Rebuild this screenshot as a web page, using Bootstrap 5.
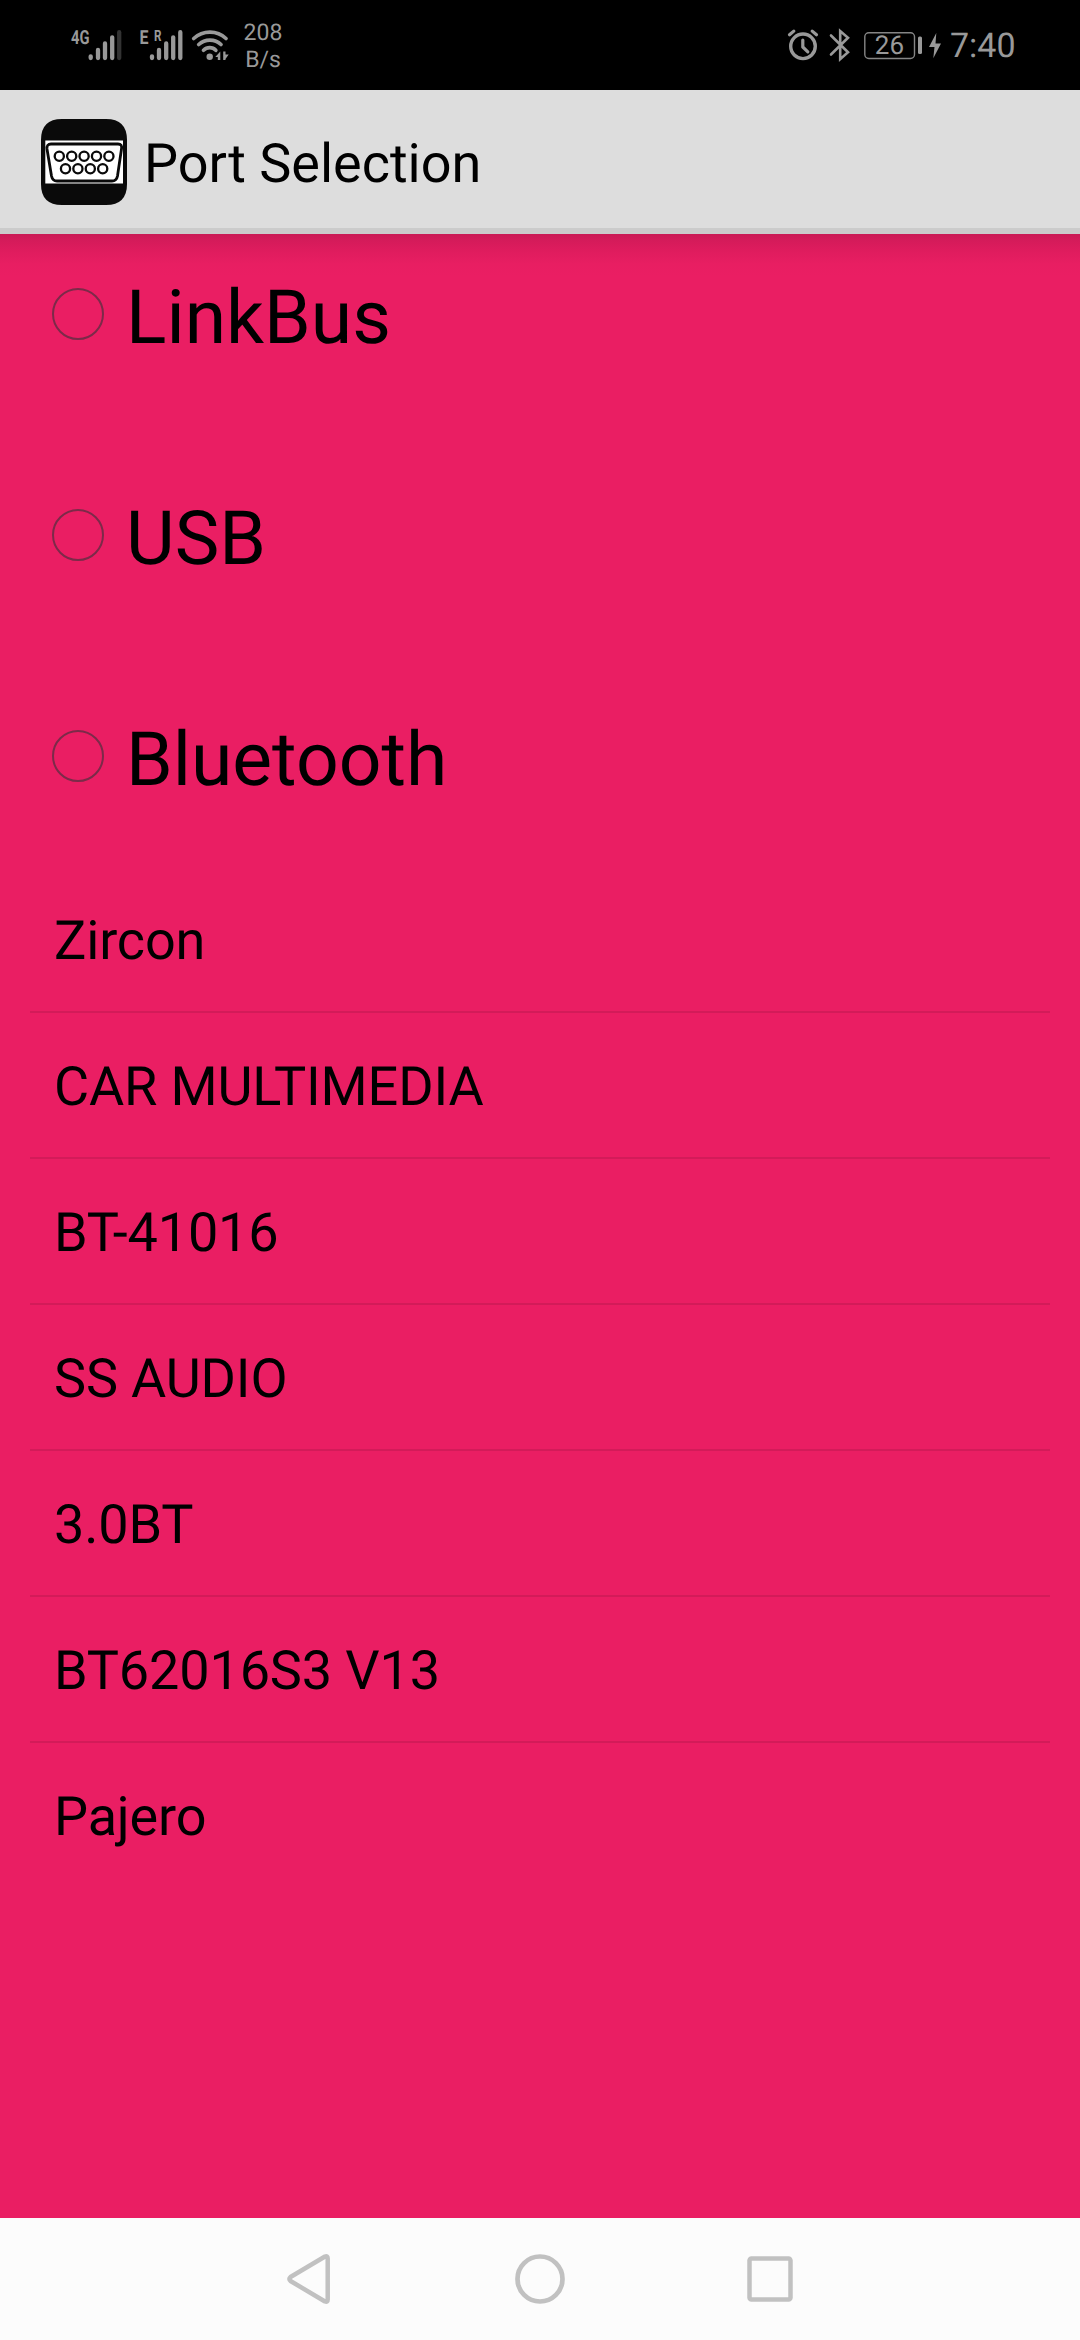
<!DOCTYPE html>
<html lang="en">
<head>
<meta charset="utf-8">
<meta name="viewport" content="width=device-width, initial-scale=1">
<title>Port Selection</title>
<link rel="stylesheet" href="https://cdn.jsdelivr.net/npm/bootstrap@5.3.0/dist/css/bootstrap.min.css">
<style>
  body { font-family: Roboto, "Liberation Sans", sans-serif; background: #ea1e63; color: #000; overflow: hidden; text-rendering: geometricPrecision; }
  svg { display: block; flex: none; }
  .screen { width: 1080px; height: 2340px; }
  .status-bar { height: 90px; background: #000; color: #999; padding: 0 64px 0 68px; }
  .status-bar svg text { font-family: Roboto, sans-serif; fill: #999; }
  .net-speed { font-size: 23px; line-height: 27px; width: 40px; margin-left: 11px; padding-top: 2px; }
  .clock { font-size: 34px; line-height: 40px; width: 66px; margin-left: 5px; padding-top: 2px; white-space: nowrap; }
  .app-bar { height: 144px; background: #ddd; border-bottom: 6px solid #cbcbcb; padding: 6px 41px 0; }
  .app-title { font-size: 54px; line-height: 64px; margin-left: 17px; padding-top: 6px; }
  .content-area { background: linear-gradient(#c91a55 0, #d41b5a 6px, #df1c5e 17px, #e81e62 30px, #ea1e63 42px) no-repeat; padding: 0 30px; }
  .port-option { height: 221px; padding: 0 0 58px 22px; }
  .port-option.form-check { margin: 0; min-height: 0; }
  .port-option .form-check-input { float: none; width: 52px; height: 52px; margin: -3px 22px 0 0; border: 2px solid #7c2a49; background: none; flex: none; }
  .port-option label { font-size: 75px; line-height: 88px; padding-top: 4px; }
  .ports { margin-bottom: -30px; }
  .device-list { --bs-list-group-bg: transparent; --bs-list-group-color: #000; --bs-list-group-border-color: #d31b59; }
  .device-list .list-group-item { height: 146px; padding: 43px 24px 0; font-size: 54px; line-height: 64px; letter-spacing: -0.15px; border-bottom-width: 2px; }
  .device-list .list-group-item:last-child { border-bottom: 0; }
  .nav-keys { height: 122px; background: #fcfcfc; padding: 0 284px; }
</style>
<script src="https://cdn.jsdelivr.net/npm/bootstrap@5.3.0/dist/js/bootstrap.bundle.min.js"></script>
</head>
<body>
<div class="screen d-flex flex-column">
  <header class="status-bar d-flex justify-content-between align-items-center">
    <div class="d-flex align-items-center">
      <svg width="164" height="90" viewBox="68 0 164 90" fill="none" stroke="#999" stroke-linecap="round">
        <g stroke="none" font-weight="700">
          <text x="71" y="44" font-size="19.5" textLength="18.5" lengthAdjust="spacingAndGlyphs">4G</text>
          <text x="139.5" y="44" font-size="19.5" textLength="9" lengthAdjust="spacingAndGlyphs">E</text>
          <text x="154" y="41" font-size="15.5" textLength="7.5" lengthAdjust="spacingAndGlyphs">R</text>
        </g>
        <g stroke-width="4.3">
          <path d="M90.7 56.3V58M98 50v8M105 43.500v14.500M112.200 37.300V58"/>
          <path d="M119.200 32.200V58" stroke="#333"/>
          <path d="M152 56.300V58M159 50v8M166.200 43.500v14.500M173.200 37.300V58M180.300 32.200V58"/>
        </g>
        <g stroke-width="3.700">
          <path d="M193.700 38.500C203 30 217 30 226 38.500M198.700 44.500C205 38.600 215 38.600 221 44.500M203.500 50.300C207 46.800 212.500 46.800 215.800 50.300"/>
        </g>
        <circle cx="209.700" cy="56.700" r="3.200" fill="#999" stroke="none"/>
        <path d="M220.300 51.500V60H217.800V57H215.300ZM223.200 51.500H225.500V54.500H228.700L225.500 59V60H223.200Z" fill="#999" stroke="none"/>
      </svg>
      <div class="net-speed text-center">208<br>B/s</div>
    </div>
    <div class="d-flex align-items-center">
      <svg width="160" height="90" viewBox="784 0 160 90" fill="none" stroke="#999">
        <circle cx="802" cy="46.300" r="12.300" stroke-width="3.400"/>
        <path d="M801.800 40v7l5 4.800" stroke-width="3.200" stroke-linecap="round" stroke-linejoin="round"/>
        <path d="M788.500 34.800l4.300-3.700M815.500 34.800l-4.300-3.700" stroke-width="3.200" stroke-linecap="round"/>
        <path d="M830 35.500L847 52.200L839.200 59.200V31L847 37.800L830 54.500" stroke-width="2.600" stroke-linecap="round" stroke-linejoin="miter"/>
        <rect x="863.800" y="32.700" width="49.700" height="25.800" rx="4" stroke="#858585" stroke-width="1.400"/>
        <rect x="917" y="36.500" width="4" height="17.500" rx="1.500" fill="#999" stroke="none"/>
        <text x="873.800" y="54" font-size="26" stroke="none">26</text>
        <path d="M935.300 33L928 47H933.500L932.300 58.300L940 43.500H934.500Z" fill="#999" stroke="none"/>
      </svg>
      <div class="clock">7:40</div>
    </div>
  </header>

  <div class="app-bar d-flex align-items-center">
    <svg width="86" height="86" viewBox="41 119 86 86">
      <path d="M62 119H106Q127 119 127 140V184Q127 205 106 205H62Q41 205 41 184V140Q41 119 62 119Z" fill="#0a0a0a"/>
      <path d="M45.300 140.500h77.700v43H45.300z" fill="#fff"/>
      <path d="M51 144H118Q122.500 144 121.500 149L117.500 176Q116.500 181 112 181H57Q52.500 181 51.500 176L47 149Q46.500 144 51 144Z" fill="#fff" stroke="#0a0a0a" stroke-width="2.800"/>
      <g fill="none" stroke="#0a0a0a" stroke-width="2.300">
        <circle cx="59.300" cy="156.200" r="4.600"/><circle cx="71.700" cy="156.200" r="4.600"/><circle cx="84.100" cy="156.200" r="4.600"/><circle cx="96.500" cy="156.200" r="4.600"/><circle cx="108.900" cy="156.200" r="4.600"/>
        <circle cx="65.500" cy="168.700" r="4.600"/><circle cx="77.900" cy="168.700" r="4.600"/><circle cx="90.300" cy="168.700" r="4.600"/><circle cx="102.700" cy="168.700" r="4.600"/>
      </g>
    </svg>
    <h1 class="app-title fw-normal mb-0">Port Selection</h1>
  </div>

  <main class="content-area flex-grow-1">
    <div class="ports">
      <div class="form-check port-option d-flex align-items-center">
        <input class="form-check-input" type="radio" name="port" id="linkbus">
        <label for="linkbus">LinkBus</label>
      </div>
      <div class="form-check port-option d-flex align-items-center">
        <input class="form-check-input" type="radio" name="port" id="usb">
        <label for="usb">USB</label>
      </div>
      <div class="form-check port-option d-flex align-items-center">
        <input class="form-check-input" type="radio" name="port" id="bluetooth">
        <label for="bluetooth">Bluetooth</label>
      </div>
    </div>
    <ul class="list-group list-group-flush device-list">
      <li class="list-group-item">Zircon</li>
      <li class="list-group-item">CAR MULTIMEDIA</li>
      <li class="list-group-item">BT-41016</li>
      <li class="list-group-item">SS AUDIO</li>
      <li class="list-group-item">3.0BT</li>
      <li class="list-group-item">BT62016S3 V13</li>
      <li class="list-group-item">Pajero</li>
    </ul>
  </main>

  <nav class="nav-keys d-flex justify-content-between align-items-center">
    <svg width="52" height="54" viewBox="284 2252 52 54" fill="none" stroke="#c1c1c1" stroke-width="4.500" stroke-linejoin="round"><path d="M325 2256.500L290.500 2277Q288.500 2279 290.500 2281L325 2301.500Q327.700 2302.500 327.700 2299.500V2258.500Q327.700 2255.500 325 2256.500Z"/></svg>
    <svg width="52" height="54" viewBox="514 2252 52 54" fill="none" stroke="#c1c1c1" stroke-width="4.700"><circle cx="540" cy="2279" r="22.500"/></svg>
    <svg width="52" height="54" viewBox="743 2252 52 54" fill="none" stroke="#c1c1c1" stroke-width="4.500"><rect x="748.500" y="2258.500" width="41" height="41" rx="2"/></svg>
  </nav>
</div>
</body>
</html>
